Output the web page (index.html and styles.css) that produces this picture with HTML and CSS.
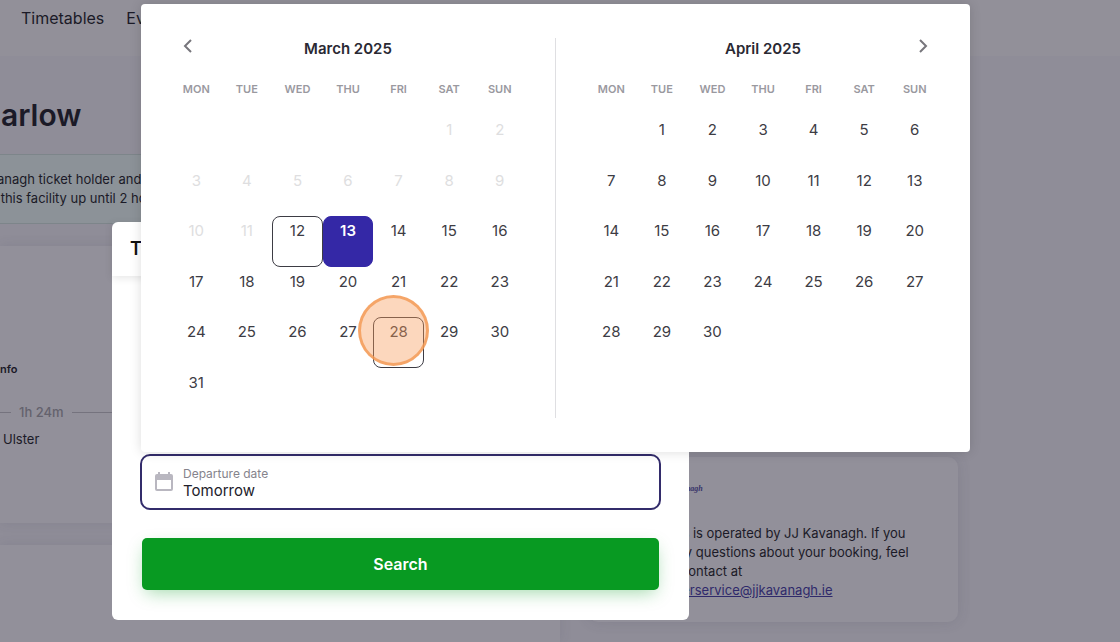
FILE: index.html
```
<!DOCTYPE html>
<html lang="en">
<head>
    <meta charset="UTF-8">
    <meta name="viewport" content="width=device-width, initial-scale=1.0">
    <title>Timetables - JJ Kavanagh</title>
    <link rel="stylesheet" href="styles.css">
</head>
<body>
    <header class="site-header">
        <nav class="site-nav">
            <a href="#">Timetables</a>
            <a href="#">Events</a>
        </nav>
    </header>

    <main class="page">
        <section class="results">
            <h1>arlow</h1>
            <div class="notice">
                anagh ticket holder and<br>
                &nbsp;this facility up until 2 hours
            </div>
            <article class="trip">
                <div class="trip-info">Info</div>
                <div class="trip-time"><span>1h 24m</span></div>
                <div class="trip-stop">Ulster</div>
            </article>
            <article class="trip trip-next"></article>
        </section>
        <aside class="operator">
            <div class="operator-logo">JJ Kavanagh</div>
            <p>This bus is operated by JJ Kavanagh. If you have any questions about your booking, feel free to contact at <a href="#">customerservice@jjkavanagh.ie</a></p>
        </aside>
    </main>

    <div class="modal" role="dialog" aria-labelledby="modal-title">
        <div class="modal-header"><h2 id="modal-title">T</h2></div>
        <form class="modal-body">
            <div class="date-field">
                <svg class="date-icon" width="18" height="20" viewBox="0 0 18 20">
                    <path fill="#b9b7c0" d="M3 0h2v2h8V0h2v2h1a2 2 0 0 1 2 2v13a2 2 0 0 1-2 2H2a2 2 0 0 1-2-2V4a2 2 0 0 1 2-2h1zM2 8v9h14V8z"/>
                </svg>
                <div class="date-text">
                    <label for="departure">Departure date</label>
                    <input type="text" id="departure" value="Tomorrow" readonly>
                </div>
            </div>
            <button type="button" class="search-btn">Search</button>
        </form>

        <div class="calendar">
            <section class="month">
                <div class="month-header">
                    <button type="button" class="arrow" aria-label="Previous month">
                        <svg width="10" height="14" viewBox="0 0 10 14"><path d="M8 1L2 7l6 6"/></svg>
                    </button>
                    <h3>March 2025</h3>
                </div>
                <div class="weekdays">
                    <span>MON</span><span>TUE</span><span>WED</span><span>THU</span><span>FRI</span><span>SAT</span><span>SUN</span>
                </div>
                <div class="days march">
                    <button type="button" disabled>1</button>
                    <button type="button" disabled>2</button>
                    <button type="button" disabled>3</button>
                    <button type="button" disabled>4</button>
                    <button type="button" disabled>5</button>
                    <button type="button" disabled>6</button>
                    <button type="button" disabled>7</button>
                    <button type="button" disabled>8</button>
                    <button type="button" disabled>9</button>
                    <button type="button" disabled>10</button>
                    <button type="button" disabled>11</button>
                    <button type="button" class="outlined">12</button>
                    <button type="button" class="selected">13</button>
                    <button type="button">14</button>
                    <button type="button">15</button>
                    <button type="button">16</button>
                    <button type="button">17</button>
                    <button type="button">18</button>
                    <button type="button">19</button>
                    <button type="button">20</button>
                    <button type="button">21</button>
                    <button type="button">22</button>
                    <button type="button">23</button>
                    <button type="button">24</button>
                    <button type="button">25</button>
                    <button type="button">26</button>
                    <button type="button">27</button>
                    <button type="button" class="outlined">28<span class="click-mark"></span></button>
                    <button type="button">29</button>
                    <button type="button">30</button>
                    <button type="button">31</button>
                </div>
            </section>
            <div class="divider"></div>
            <section class="month">
                <div class="month-header">
                    <h3>April 2025</h3>
                    <button type="button" class="arrow" aria-label="Next month">
                        <svg width="10" height="14" viewBox="0 0 10 14"><path d="M2 1l6 6-6 6"/></svg>
                    </button>
                </div>
                <div class="weekdays">
                    <span>MON</span><span>TUE</span><span>WED</span><span>THU</span><span>FRI</span><span>SAT</span><span>SUN</span>
                </div>
                <div class="days april">
                    <button type="button">1</button>
                    <button type="button">2</button>
                    <button type="button">3</button>
                    <button type="button">4</button>
                    <button type="button">5</button>
                    <button type="button">6</button>
                    <button type="button">7</button>
                    <button type="button">8</button>
                    <button type="button">9</button>
                    <button type="button">10</button>
                    <button type="button">11</button>
                    <button type="button">12</button>
                    <button type="button">13</button>
                    <button type="button">14</button>
                    <button type="button">15</button>
                    <button type="button">16</button>
                    <button type="button">17</button>
                    <button type="button">18</button>
                    <button type="button">19</button>
                    <button type="button">20</button>
                    <button type="button">21</button>
                    <button type="button">22</button>
                    <button type="button">23</button>
                    <button type="button">24</button>
                    <button type="button">25</button>
                    <button type="button">26</button>
                    <button type="button">27</button>
                    <button type="button">28</button>
                    <button type="button">29</button>
                    <button type="button">30</button>
                </div>
            </section>
        </div>
    </div>
</body>
</html>
```

FILE: styles.css
```
* {
    box-sizing: border-box;
}
body {
    margin: 0;
    min-height: 100vh;
    background: #8f8d98;
    color: #1b1a27;
    font-family: Inter, "Liberation Sans", sans-serif;
    font-size: 13px;
    line-height: 19px;
}
h1, h2, h3, p {
    margin: 0;
}
button, input {
    font-family: inherit;
}

/* page behind the dialog */
.site-header {
    padding: 6px 21px 26px;
    background: #929099;
}
.site-nav {
    display: flex;
    gap: 22px;
    font-size: 16px;
    line-height: 24px;
}
.site-nav a {
    color: #1b1a27;
    text-decoration: none;
}
.page {
    display: flex;
    align-items: flex-start;
    gap: 28px;
}
.results {
    flex: 0 0 50%;
}
.results h1 {
    padding: 40px 0 20px 1px;
    font-size: 30px;
    font-weight: 600;
    line-height: 38px;
}
.notice {
    margin-left: -4px;
    padding: 15px 1px;
    background: #8c9298;
    border-top: 1px solid #7d858a;
    border-bottom: 1px solid #7d858a;
}
.trip {
    min-height: 277px;
    margin-top: 22px;
    padding: 114px 0 74px;
    background: #92909a;
    box-shadow: 0 0 12px rgba(60, 56, 80, 0.12);
}
.trip-next {
    min-height: 97px;
    padding: 0;
}
.trip-info {
    margin-left: -3px;
    font-size: 11px;
    font-weight: 600;
}
.trip-time {
    display: flex;
    align-items: center;
    gap: 8px;
    margin-top: 24px;
    color: #64626d;
    font-weight: 500;
}
.trip-time::before,
.trip-time::after {
    content: "";
    width: 11px;
    border-top: 1px solid #75737e;
}
.trip-time::after {
    flex: 1;
}
.trip-stop {
    margin-top: 8px;
    padding-left: 3px;
}
.operator {
    flex: 0 0 370px;
    margin-top: 401px;
    padding: 22px 32px 22px 49px;
    border-radius: 10px;
    background: #92909a;
    box-shadow: 0 0 14px rgba(60, 56, 80, 0.14);
}
.operator-logo {
    margin-bottom: 26px;
    padding-left: 22px;
    color: #373369;
    font: italic bold 8px/19px "Liberation Serif", serif;
}
.operator a {
    color: #2f2a6b;
}

/* search dialog */
.modal {
    position: absolute;
    top: 222px;
    left: 10%;
    width: 577px;
    border-radius: 6px;
    background: #fff;
}
.modal-header {
    padding: 14px 18px;
    box-shadow: 0 2px 8px rgba(0, 0, 0, 0.1);
}
.modal-header h2 {
    color: #111;
    font-size: 18px;
    font-weight: 600;
    line-height: 26px;
}
.modal-body {
    padding: 178px 28px 30px;
}
.date-field {
    display: flex;
    align-items: center;
    gap: 10px;
    padding: 9px 13px;
    border: 2px solid #332c6b;
    border-radius: 10px;
    background: #fff;
}
.date-text {
    display: flex;
    flex: 1;
    flex-direction: column;
}
.date-text label {
    color: #85838c;
    font-size: 12px;
    line-height: 18px;
}
.date-text input {
    height: 16px;
    padding: 0;
    border: 0;
    outline: 0;
    background: transparent;
    color: #22212b;
    font-size: 15px;
    line-height: 16px;
}
.search-btn {
    display: block;
    width: calc(100% - 4px);
    margin: 28px auto 0;
    padding: 14px;
    border: 0;
    border-radius: 5px;
    background: #089a22;
    box-shadow: 0 6px 18px -4px rgba(8, 154, 34, 0.4);
    color: #fff;
    font-size: 16px;
    font-weight: 600;
    line-height: 24px;
    cursor: pointer;
}

/* date picker */
.calendar {
    position: absolute;
    top: -218px;
    left: 29px;
    display: grid;
    grid-template-columns: 1fr 1px 1fr;
    gap: 30px;
    width: 829px;
    padding: 34px 30px;
    border-radius: 4px;
    background: #fff;
    box-shadow: 0 0 12px rgba(0, 0, 0, 0.14);
}
.divider {
    background: #dfdfe2;
}
.month-header {
    display: grid;
    grid-template-columns: 34px 1fr 34px;
}
.month-header h3 {
    grid-column: 2;
    color: #2a2933;
    font-size: 15px;
    font-weight: 600;
    line-height: 22px;
    text-align: center;
}
.arrow {
    height: 16px;
    padding: 0;
    border: 0;
    background: none;
    line-height: 0;
    cursor: pointer;
}
.arrow path {
    fill: none;
    stroke: #77767c;
    stroke-width: 2;
}
.weekdays,
.days {
    display: grid;
    grid-template-columns: repeat(7, 1fr);
}
.weekdays {
    margin: 20px 0 16px;
    color: #9a999f;
    font-size: 11px;
    font-weight: 600;
    text-align: center;
}
.days button {
    position: relative;
    display: flex;
    justify-content: center;
    aspect-ratio: 1;
    padding: 4px 0;
    border: 1px solid transparent;
    border-radius: 8px;
    background: none;
    color: #3d3c44;
    font-size: 15px;
    line-height: 19px;
    cursor: pointer;
}
.days button:disabled {
    color: #dedee0;
    cursor: default;
}
.march button:first-child {
    grid-column: 6;
}
.april button:first-child {
    grid-column: 2;
}
.days .outlined {
    border-color: #3d3c44;
}
.days .selected {
    border-color: #3428a6;
    background: #3428a6;
    color: #fff;
    font-weight: 600;
}
.click-mark {
    position: absolute;
    top: -23px;
    left: -16px;
    width: 71px;
    height: 71px;
    border: 3px solid rgba(243, 152, 82, 0.8);
    border-radius: 50%;
    background: rgba(248, 156, 89, 0.4);
}
```
